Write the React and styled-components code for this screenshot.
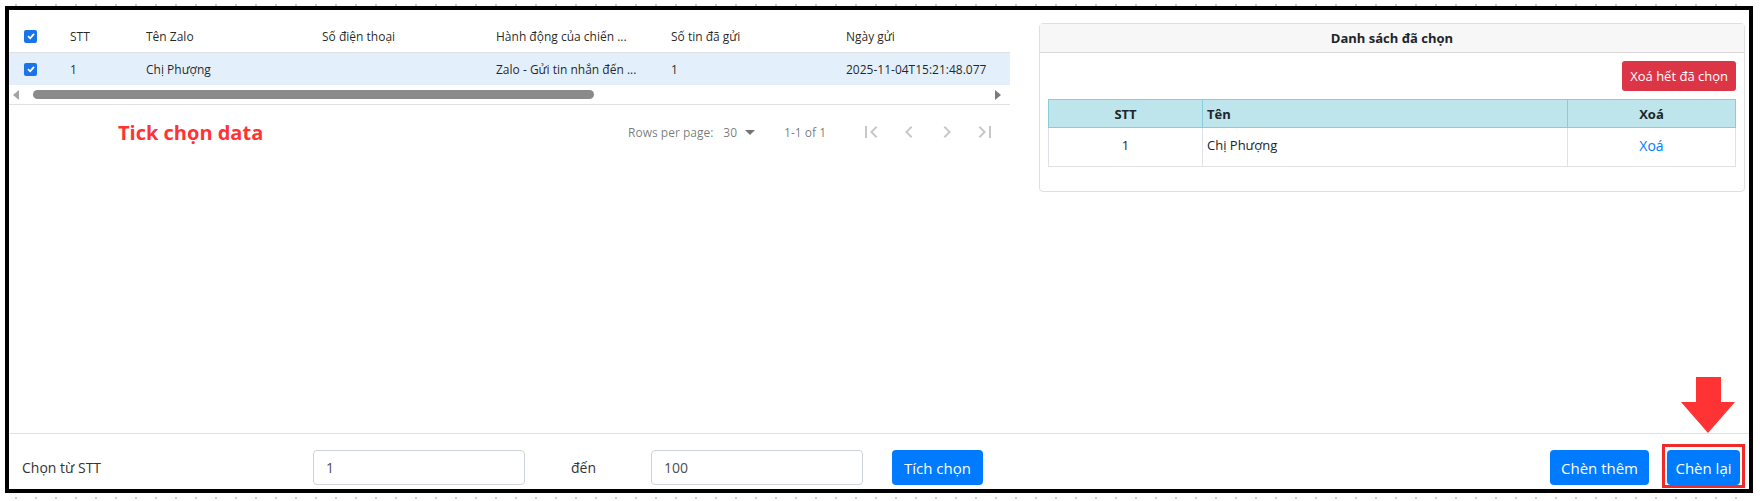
import React from "react";
import styled, { createGlobalStyle } from "styled-components";

const GlobalStyle = createGlobalStyle`
  html, body {
    margin: 0;
    padding: 0;
    background: #fff;
  }
  body {
    font-family: "Open Sans", "Noto Sans", Arial, sans-serif;
    color: #212529;
  }
  * {
    box-sizing: border-box;
  }
`;

const columns = [
  { title: "STT", width: 76 },
  { title: "Tên Zalo", width: 176 },
  { title: "Số điện thoại", width: 174 },
  { title: "Hành động của chiến ...", width: 175 },
  { title: "Số tin đã gửi", width: 175 },
  { title: "Ngày gửi", width: 181 },
];

const row = ["1", "Chị Phượng", "", "Zalo - Gửi tin nhắn đến ...", "1", "2025-11-04T15:21:48.077"];

const CheckIcon = () => (
  <CheckBox>
    <svg width="10" height="10" viewBox="0 0 10 10">
      <path d="M2 5.2 L4.2 7.3 L8 2.8" fill="none" stroke="#fff" strokeWidth="1.8" />
    </svg>
  </CheckBox>
);

const PageIcon = ({ d }) => (
  <PageBtn>
    <svg width="24" height="24" viewBox="0 0 24 24">
      <path d={d} fill="rgba(0,0,0,0.22)" />
    </svg>
  </PageBtn>
);

const App = () => {
  return (
    <Page>
      <GlobalStyle />
      <Dots />
      <Frame>
        <Main>
          <LeftPane>
            <GridHead>
              <CheckCell>
                <CheckIcon />
              </CheckCell>
              {columns.map((c) => (
                <Cell key={c.title} $w={c.width}>
                  {c.title}
                </Cell>
              ))}
            </GridHead>
            <GridRow>
              <CheckCell>
                <CheckIcon />
              </CheckCell>
              {columns.map((c, i) => (
                <Cell key={c.title} $w={c.width}>
                  {row[i]}
                </Cell>
              ))}
            </GridRow>
            <ScrollBar>
              <Arrow $dir="left" />
              <Thumb />
              <Arrow $dir="right" />
            </ScrollBar>
            <Pagination>
              <Note>Tick chọn data</Note>
              <PageText>Rows per page:</PageText>
              <PerPage>
                30
                <svg width="24" height="24" viewBox="0 0 24 24">
                  <path d="M7 10l5 5 5-5z" fill="rgba(0,0,0,0.54)" />
                </svg>
              </PerPage>
              <Range>1-1 of 1</Range>
              <PageIcon d="M18.41 16.59L13.82 12l4.59-4.59L17 6l-6 6 6 6zM6 6h2v12H6z" />
              <PageIcon d="M15.41 7.41L14 6l-6 6 6 6 1.41-1.41L10.83 12z" />
              <PageIcon d="M10 6L8.59 7.41 13.17 12l-4.58 4.59L10 18l6-6z" />
              <PageIcon d="M5.59 7.41L10.18 12l-4.59 4.59L7 18l6-6-6-6zM16 6h2v12h-2z" />
            </Pagination>
          </LeftPane>
          <RightPane>
            <Card>
              <CardHeader>Danh sách đã chọn</CardHeader>
              <CardBody>
                <Toolbar>
                  <DangerButton>Xoá hết đã chọn</DangerButton>
                </Toolbar>
                <Table>
                  <colgroup>
                    <col style={{ width: "154px" }} />
                    <col style={{ width: "365px" }} />
                    <col />
                  </colgroup>
                  <thead>
                    <tr>
                      <Th $align="center">STT</Th>
                      <Th>Tên</Th>
                      <Th $align="center">Xoá</Th>
                    </tr>
                  </thead>
                  <tbody>
                    <tr>
                      <Td $align="center">1</Td>
                      <Td>Chị Phượng</Td>
                      <Td $align="center">
                        <LinkText>Xoá</LinkText>
                      </Td>
                    </tr>
                  </tbody>
                </Table>
              </CardBody>
            </Card>
            <DownArrow>
              <svg width="54" height="56" viewBox="0 0 54 56">
                <path d="M15 0 H40 V25 H54 L27 56 L0 25 H15 Z" fill="#ff3333" />
              </svg>
            </DownArrow>
          </RightPane>
        </Main>
        <BottomBar>
          <Label $w={291}>Chọn từ STT</Label>
          <Input defaultValue="1" />
          <Label $w={80} $ml={46}>
            đến
          </Label>
          <Input defaultValue="100" />
          <PrimaryButton $w={91} $ml={29}>
            Tích chọn
          </PrimaryButton>
          <Spacer />
          <PrimaryButton $w={99}>Chèn thêm</PrimaryButton>
          <Highlight>
            <PrimaryButton $w={73}>Chèn lại</PrimaryButton>
          </Highlight>
        </BottomBar>
      </Frame>
      <Dots />
    </Page>
  );
};

export default App;

const Page = styled.div`
  width: 1760px;
  height: 501px;
  padding: 4px 7px 0 5px;
  display: flex;
  flex-direction: column;
  overflow: hidden;
`;

const Dots = styled.div`
  height: 2px;
  flex: none;
  background: repeating-linear-gradient(
    to right,
    transparent 0 10px,
    #cfcfcf 10px 12px,
    transparent 12px 20px
  );
  &:last-child {
    margin-top: 4px;
  }
`;

const Frame = styled.div`
  border: 4px solid #000;
  height: 487px;
  flex: none;
  display: flex;
  flex-direction: column;
  background: #fff;
`;

const Main = styled.div`
  height: 424px;
  display: flex;
  border-bottom: 1px solid #dee2e6;
`;

const LeftPane = styled.div`
  width: 1001px;
  flex: none;
  padding-top: 10px;
  overflow: hidden;
`;

const GridHead = styled.div`
  display: flex;
  align-items: center;
  height: 33px;
  border-bottom: 1px solid #e0e0e0;
  font-size: 12px;
  font-weight: 500;
  color: rgba(0, 0, 0, 0.87);
`;

const GridRow = styled(GridHead)`
  height: 32px;
  background: #e3effa;
  border-bottom: none;
  font-weight: 400;
`;

const CheckCell = styled.div`
  width: 44px;
  flex: none;
  padding-left: 15px;
  display: flex;
  align-items: center;
`;

const CheckBox = styled.span`
  width: 13px;
  height: 13px;
  border-radius: 2px;
  background: #1a73e8;
  display: flex;
  align-items: center;
  justify-content: center;
`;

const Cell = styled.div`
  width: ${(p) => p.$w}px;
  flex: none;
  padding-left: 17px;
  white-space: nowrap;
  overflow: hidden;
`;

const ScrollBar = styled.div`
  height: 20px;
  display: flex;
  align-items: center;
  padding: 0 9px 0 4px;
  border-bottom: 1px solid #e0e0e0;
`;

const Arrow = styled.span`
  width: 0;
  height: 0;
  border-top: 5px solid transparent;
  border-bottom: 5px solid transparent;
  ${(p) =>
    p.$dir === "left"
      ? "border-right: 6px solid #a3a3a3;"
      : "border-left: 6px solid #7a7a7a; margin-left: auto;"}
`;

const Thumb = styled.span`
  width: 561px;
  height: 9px;
  margin-left: 14px;
  border-radius: 5px;
  background: #8a8a8a;
`;

const Pagination = styled.div`
  height: 54px;
  display: flex;
  align-items: center;
  padding-right: 6px;
  font-size: 12px;
  color: rgba(0, 0, 0, 0.54);
`;

const Note = styled.span`
  margin-left: 109px;
  margin-right: auto;
  font-size: 20px;
  font-weight: 700;
  color: #ff3333;
`;

const PageText = styled.span`
  margin: 0 4px;
`;

const PerPage = styled.span`
  display: flex;
  align-items: center;
  margin-left: 6px;
  svg {
    margin-left: 1px;
  }
`;

const Range = styled.span`
  margin: 0 26px 0 22px;
`;

const PageBtn = styled.span`
  width: 40px;
  height: 40px;
  padding: 8px;
  margin: 0 -1px;
  display: flex;
`;

const RightPane = styled.div`
  flex: 1;
  display: flex;
  flex-direction: column;
  padding: 13px 4px 0 29px;
`;

const Card = styled.div`
  border: 1px solid rgba(0, 0, 0, 0.125);
  border-radius: 4px;
`;

const CardHeader = styled.div`
  height: 29px;
  display: flex;
  align-items: center;
  justify-content: center;
  background: #f7f7f7;
  border-bottom: 1px solid rgba(0, 0, 0, 0.125);
  font-size: 13px;
  font-weight: 700;
  color: #212529;
`;

const CardBody = styled.div`
  padding: 8px 8px 24px;
`;

const Toolbar = styled.div`
  display: flex;
  justify-content: flex-end;
  margin-bottom: 8px;
`;

const DangerButton = styled.button`
  height: 30px;
  padding: 0 8px;
  border: none;
  border-radius: 3px;
  background: #dc3545;
  color: #fff;
  font-family: inherit;
  font-size: 13px;
`;

const Table = styled.table`
  width: 100%;
  border-collapse: collapse;
  font-size: 13px;
  color: #212529;
`;

const Th = styled.th`
  height: 28px;
  padding: 0 4px;
  background: #bee5eb;
  border: 1px solid #86cfda;
  text-align: ${(p) => p.$align || "left"};
  font-weight: 700;
`;

const Td = styled.td`
  height: 39px;
  padding: 0 4px 4px;
  border: 1px solid #dee2e6;
  text-align: ${(p) => p.$align || "left"};
`;

const LinkText = styled.span`
  color: #007bff;
  font-size: 14px;
`;

const DownArrow = styled.div`
  margin-top: auto;
  align-self: flex-end;
  margin-right: 10px;
  display: flex;
`;

const BottomBar = styled.div`
  flex: 1;
  display: flex;
  align-items: flex-start;
  padding: 16px 4px 0 13px;
`;

const Label = styled.span`
  width: ${(p) => p.$w}px;
  margin-left: ${(p) => p.$ml || 0}px;
  height: 35px;
  flex: none;
  display: flex;
  align-items: center;
  font-size: 14px;
  color: #333;
`;

const Input = styled.input`
  width: 212px;
  height: 35px;
  flex: none;
  padding: 0 12px;
  border: 1px solid #ced4da;
  border-radius: 4px;
  font-family: inherit;
  font-size: 14px;
  color: #495057;
  outline: none;
`;

const PrimaryButton = styled.button`
  width: ${(p) => p.$w}px;
  margin-left: ${(p) => p.$ml || 0}px;
  height: 35px;
  flex: none;
  border: none;
  border-radius: 4px;
  background: #007bff;
  color: #fff;
  font-family: inherit;
  font-size: 15px;
  padding: 0;
`;

const Spacer = styled.div`
  flex: 1;
`;

const Highlight = styled.div`
  margin: -6px 0 0 13px;
  padding: 3px 2px 0;
  border: 3px solid #f02a2a;
  display: flex;
`;
